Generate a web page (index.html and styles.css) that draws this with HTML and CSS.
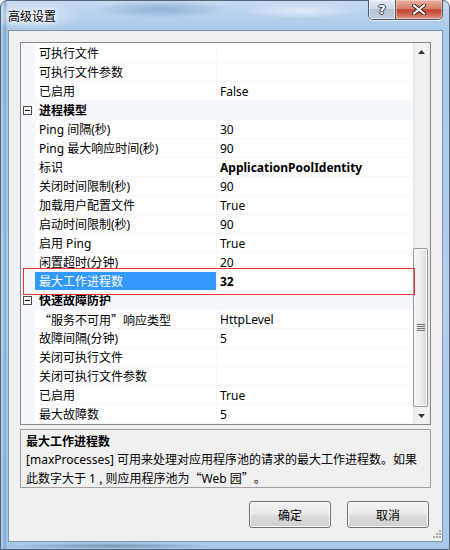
FILE: index.html
```html
<!DOCTYPE html>
<html lang="zh-CN">
<head>
<meta charset="utf-8">
<title>高级设置</title>
<link rel="stylesheet" href="styles.css">
</head>
<body>
<div class="window">
  <div class="titlebar">
    <span class="title">高级设置</span>
    <div class="caption">
      <div class="cbtn help"><span class="qmark">?</span></div>
      <div class="cbtn close">
        <svg width="14" height="11" viewBox="0 0 14 11"><path d="M2 1.5 L12 9.5 M12 1.5 L2 9.5" stroke="#3b2420" stroke-width="4" stroke-linecap="square"/><path d="M2 1.5 L12 9.5 M12 1.5 L2 9.5" stroke="#fff" stroke-width="2" stroke-linecap="square"/></svg>
      </div>
    </div>
  </div>
  <div class="client">
    <div class="grid">
      <div class="rows">
        <div class="row"><div class="gut"></div><div class="name">可执行文件</div><div class="val"></div></div>
        <div class="row"><div class="gut"></div><div class="name">可执行文件参数</div><div class="val"></div></div>
        <div class="row"><div class="gut"></div><div class="name">已启用</div><div class="val">False</div></div>
        <div class="row cat"><div class="gut"><span class="exp"></span></div><div class="catname">进程模型</div></div>
        <div class="row"><div class="gut"></div><div class="name">Ping 间隔(秒)</div><div class="val">30</div></div>
        <div class="row"><div class="gut"></div><div class="name">Ping 最大响应时间(秒)</div><div class="val">90</div></div>
        <div class="row"><div class="gut"></div><div class="name">标识</div><div class="val bold">ApplicationPoolIdentity</div></div>
        <div class="row"><div class="gut"></div><div class="name">关闭时间限制(秒)</div><div class="val">90</div></div>
        <div class="row"><div class="gut"></div><div class="name">加载用户配置文件</div><div class="val">True</div></div>
        <div class="row"><div class="gut"></div><div class="name">启动时间限制(秒)</div><div class="val">90</div></div>
        <div class="row"><div class="gut"></div><div class="name">启用 Ping</div><div class="val">True</div></div>
        <div class="row"><div class="gut"></div><div class="name">闲置超时(分钟)</div><div class="val">20</div></div>
        <div class="row sel"><div class="gut"></div><div class="name">最大工作进程数</div><div class="val bold">32</div></div>
        <div class="row cat"><div class="gut"><span class="exp"></span></div><div class="catname">快速故障防护</div></div>
        <div class="row"><div class="gut"></div><div class="name"><span class="qo">“</span>服务不可用<span class="qc">”</span>响应类型</div><div class="val">HttpLevel</div></div>
        <div class="row"><div class="gut"></div><div class="name">故障间隔(分钟)</div><div class="val">5</div></div>
        <div class="row"><div class="gut"></div><div class="name">关闭可执行文件</div><div class="val"></div></div>
        <div class="row"><div class="gut"></div><div class="name">关闭可执行文件参数</div><div class="val"></div></div>
        <div class="row"><div class="gut"></div><div class="name">已启用</div><div class="val">True</div></div>
        <div class="row"><div class="gut"></div><div class="name">最大故障数</div><div class="val">5</div></div>
      </div>
      <div class="vscroll">
        <div class="sbtn"><svg width="7" height="4" viewBox="0 0 7 4"><polygon points="0,4 7,4 3.5,0" fill="#333"/></svg></div>
        <div class="track"></div>
        <div class="thumb">
          <svg width="8" height="8" viewBox="0 0 8 8"><path d="M0 0.5H8M0 2.5H8M0 4.5H8M0 6.5H8" stroke="#6e6e6e" stroke-width="1"/></svg>
        </div>
        <div class="sbtn"><svg width="7" height="4" viewBox="0 0 7 4"><polygon points="0,0 7,0 3.5,4" fill="#333"/></svg></div>
      </div>
    </div>
    <div class="desc">
      <div class="desc-title">最大工作进程数</div>
      <div class="desc-text">[maxProcesses] 可用来处理对应用程序池的请求的最大工作进程数。如果<br>此数字大于 1 <span class="cjk">,</span> 则应用程序池为<span class="qo">“</span>Web 园<span class="qc">”</span>。</div>
    </div>
    <div class="buttons">
      <div class="btn">确定</div>
      <div class="btn">取消</div>
    </div>
    <svg class="grip" width="10" height="10" viewBox="0 0 10 10">
      <g fill="#a8a8a8">
        <rect x="8" y="0" width="2" height="2"/>
        <rect x="5" y="3" width="2" height="2"/><rect x="8" y="3" width="2" height="2"/>
        <rect x="2" y="6" width="2" height="2"/><rect x="5" y="6" width="2" height="2"/><rect x="8" y="6" width="2" height="2"/>
      </g>
    </svg>
  </div>
  <div class="annot"></div>
</div>
</body>
</html>
```

FILE: styles.css
```css
* { box-sizing: border-box; }
html, body { margin: 0; padding: 0; background: #fff; }
body {
  font-family: "Noto Sans", "Noto Sans CJK SC", sans-serif;
  font-size: 12px;
  color: #000;
}
.cjk { font-family: "Noto Sans CJK SC", sans-serif; }
.qo, .qc {
  display: inline-block;
  width: 12px;
  font-family: "Noto Sans CJK SC", sans-serif;
}
.qo { text-align: right; }
.qc { text-align: left; }

.window {
  position: relative;
  width: 450px;
  height: 550px;
  border: 1px solid #52647c;
  border-radius: 7px 7px 0 0;
  padding: 0 6px 7px 7px;
  display: flex;
  flex-direction: column;
  background:
    radial-gradient(ellipse 70px 9px at 160px 8px, rgba(90,130,180,0.45), rgba(90,130,180,0) 100%),
    radial-gradient(ellipse 60px 8px at 300px 10px, rgba(255,255,255,0.55), rgba(255,255,255,0) 100%),
    radial-gradient(ellipse 50px 14px at 32px 15px, rgba(255,255,255,0.6), rgba(255,255,255,0) 100%),
    radial-gradient(ellipse 110px 3px at 110px 545px, rgba(60,80,110,0.45), rgba(60,80,110,0) 100%),
    linear-gradient(90deg, rgba(100,140,190,0) 2px, rgba(100,140,190,0.45) 3px, rgba(100,140,190,0.45) 5px, rgba(100,140,190,0) 6px),
    linear-gradient(180deg, #c8dcf1 0, #b6d1ed 14px, #a9c9ea 30px, #b2cfec 300px, #a8c8ea 100%);
}

.titlebar {
  height: 29px;
  display: flex;
  justify-content: space-between;
  align-items: flex-start;
  flex: none;
}
.title {
  align-self: center;
  font-family: "Noto Sans CJK SC", sans-serif;
  font-size: 12px;
  line-height: 16px;
  margin-top: 1px;
  text-shadow: 0 0 6px #fff, 0 0 3px #fff;
}
.caption {
  display: flex;
  margin-top: -1px;
  border: 1px solid #4d5a6c;
  border-top: none;
  border-radius: 0 0 5px 5px;
  overflow: hidden;
  box-shadow: 0 1px 0 rgba(255,255,255,0.6);
}
.cbtn {
  height: 19px;
  display: flex;
  align-items: center;
  justify-content: center;
}
.help {
  width: 27px;
  border-right: 1px solid #4d5a6c;
  background: linear-gradient(180deg, #e4ebf3 0%, #cfdae6 45%, #b4c4d7 50%, #c0cfdf 100%);
  box-shadow: inset 0 0 0 1px rgba(255,255,255,0.55);
}
.qmark {
  font-family: "DejaVu Sans", sans-serif;
  font-weight: bold;
  font-size: 13px;
  line-height: 13px;
  color: #fff;
  text-shadow: 0 0 1px #2c3440, 1px 0 0 #3a4452, -1px 0 0 #3a4452, 0 1px 0 #3a4452, 0 -1px 0 #3a4452;
}
.close {
  width: 46px;
  background: linear-gradient(180deg, #e9b0a2 0%, #d9806b 45%, #c3412b 52%, #cf6a55 80%, #e0a08e 100%);
  box-shadow: inset 0 0 0 1px rgba(255,220,210,0.5);
}

.client {
  position: relative;
  flex: 1;
  background: #f0f0f0;
  border: 1px solid #7e93ad;
  padding: 11px 11px 13px 11px;
  display: flex;
  flex-direction: column;
}

.grid {
  height: 383px;
  border: 1px solid #828790;
  background: #fff;
  display: flex;
  flex: none;
}
.rows {
  flex: 1;
  padding-top: 1px;
  display: flex;
  flex-direction: column;
}
.row {
  display: flex;
  height: 19px;
  border-bottom: 1px solid #f4f7fc;
  line-height: 18px;
  white-space: nowrap;
}
.gut {
  width: 14px;
  flex: none;
  background: #f4f7fc;
  display: flex;
  align-items: center;
}
.name {
  width: 182px;
  flex: none;
  padding-left: 4px;
  padding-top: 1px;
  border-right: 1px solid #f4f7fc;
  overflow: hidden;
}
.val {
  flex: 1;
  padding-left: 3px;
  padding-top: 1px;
  overflow: hidden;
}
.bold { font-weight: bold; }
.row.sel .name { background: #3399ff; color: #fff; }
.row.cat { background: #f4f7fc; }
.catname {
  padding-left: 4px;
  padding-top: 1px;
  font-weight: bold;
}
.exp {
  position: relative;
  width: 9px;
  height: 9px;
  margin-left: 2px;
  border: 1px solid #4c4c4c;
  background: #fff;
}
.exp::after {
  content: "";
  position: absolute;
  left: 1px;
  top: 3px;
  width: 5px;
  height: 1px;
  background: #000;
}

.vscroll {
  width: 17px;
  flex: none;
  display: flex;
  flex-direction: column;
  background: linear-gradient(90deg, #e5e5e5 0, #f0f0f0 2px, #f2f2f2 14px, #e9e9e9 17px);
}
.sbtn {
  height: 17px;
  flex: none;
  display: flex;
  align-items: center;
  justify-content: center;
}
.track { flex: 1; }
.thumb {
  height: 159px;
  flex: none;
  margin: 0 2px 0 0;
  border: 1px solid #979797;
  border-radius: 2px;
  background: linear-gradient(90deg, #f6f6f6 0%, #ececec 50%, #d8d8d8 100%);
  box-shadow: inset 0 0 0 1px #fbfbfb;
  display: flex;
  align-items: center;
  justify-content: center;
}

.desc {
  margin-top: 4px;
  height: 59px;
  flex: none;
  border: 1px solid #a0a0a0;
  padding: 3px 5px 0 5px;
  line-height: 18px;
}
.desc-title { font-weight: bold; }

.buttons {
  margin-top: 13px;
  display: flex;
  justify-content: flex-end;
  gap: 16px;
  padding-right: 2px;
}
.btn {
  width: 82px;
  height: 27px;
  border: 1px solid #707070;
  border-radius: 3px;
  background: linear-gradient(180deg, #f2f2f2 0%, #ebebeb 48%, #dddddd 52%, #cfcfcf 100%);
  box-shadow: inset 0 0 0 1px #fbfbfb;
  display: flex;
  align-items: center;
  justify-content: center;
  font-family: "Noto Sans CJK SC", sans-serif;
  line-height: 16px;
}
.grip {
  position: absolute;
  right: 1px;
  bottom: 1px;
}

.annot {
  position: absolute;
  left: 22px;
  top: 267px;
  width: 392px;
  height: 27px;
  border: 1px solid #ee3333;
  pointer-events: none;
}
```
